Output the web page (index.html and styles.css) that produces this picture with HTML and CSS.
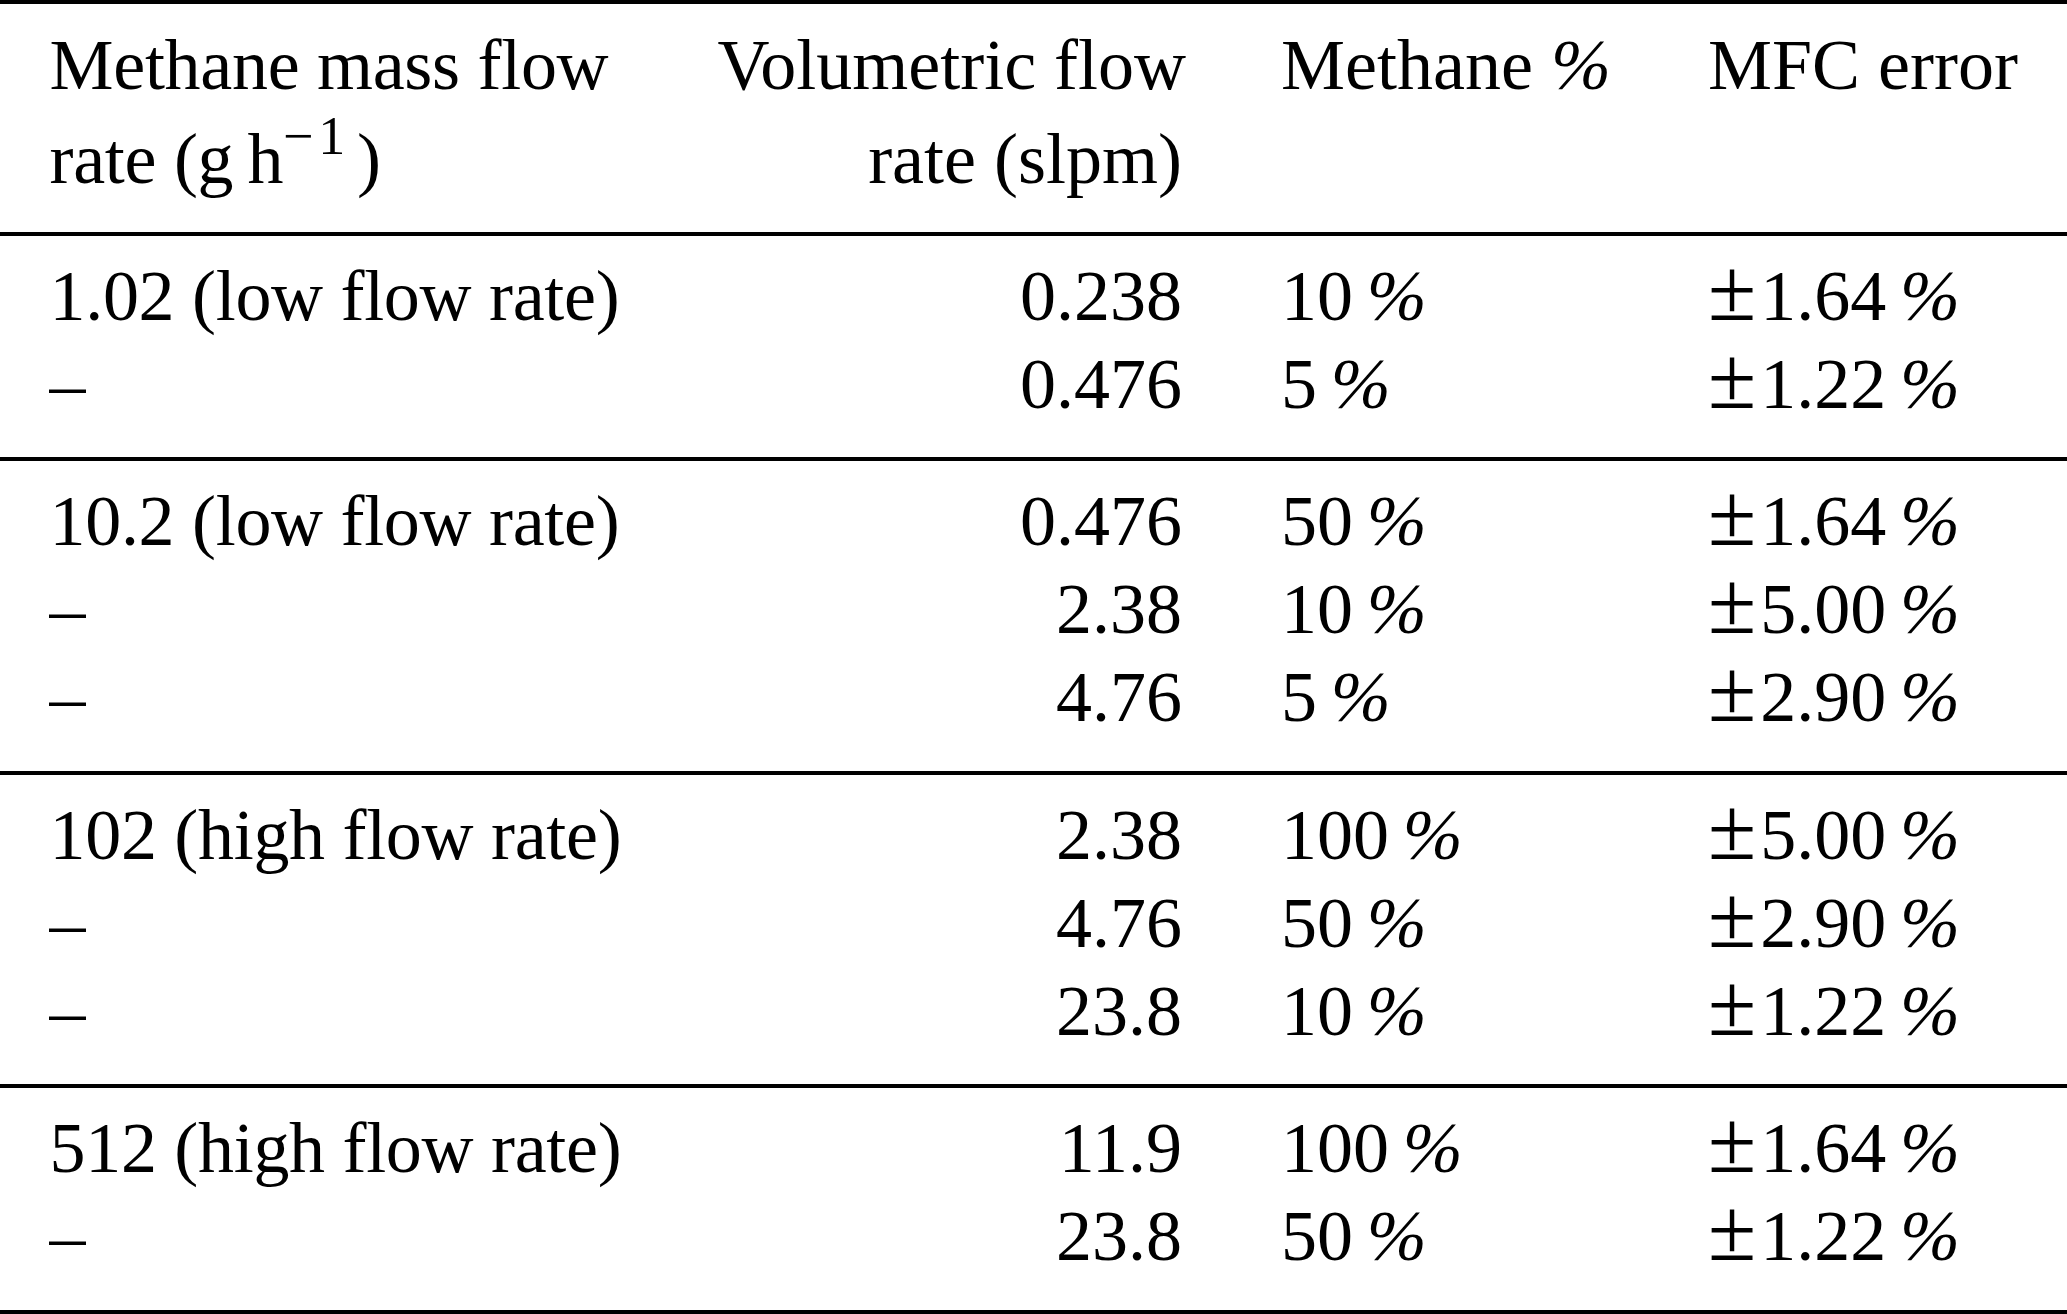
FILE: index.html
```html
<!DOCTYPE html>
<html lang="en">
<head>
<meta charset="utf-8">
<title>Methane flow rates</title>
<link rel="stylesheet" href="styles.css">
</head>
<body>
<table class="flow-table">
  <colgroup>
    <col class="c-mass">
    <col class="c-vol">
    <col class="c-pct">
    <col class="c-err">
  </colgroup>
  <thead>
    <tr>
      <th class="lab"><span class="hl">Methane mass flow</span><span class="hl hl2">rate (g&#8201;h<sup class="sup"><span class="mn">&minus;</span>1</sup>)</span></th>
      <th class="num"><span class="hl">Volumetric flow</span><span class="hl hl2">rate (slpm)</span></th>
      <th><span class="hl">Methane <span class="pc">%</span></span></th>
      <th><span class="hl">MFC error</span></th>
    </tr>
  </thead>
  <tbody>
    <tr><td class="lab">1.02 (low flow rate)</td><td class="num">0.238</td><td>10<span class="pc u">%</span></td><td><span class="pm">&plusmn;</span>1.64<span class="pc u">%</span></td></tr>
    <tr><td class="lab">&ndash;</td><td class="num">0.476</td><td>5<span class="pc u">%</span></td><td><span class="pm">&plusmn;</span>1.22<span class="pc u">%</span></td></tr>
  </tbody>
  <tbody>
    <tr><td class="lab">10.2 (low flow rate)</td><td class="num">0.476</td><td>50<span class="pc u">%</span></td><td><span class="pm">&plusmn;</span>1.64<span class="pc u">%</span></td></tr>
    <tr><td class="lab">&ndash;</td><td class="num">2.38</td><td>10<span class="pc u">%</span></td><td><span class="pm">&plusmn;</span>5.00<span class="pc u">%</span></td></tr>
    <tr><td class="lab">&ndash;</td><td class="num">4.76</td><td>5<span class="pc u">%</span></td><td><span class="pm">&plusmn;</span>2.90<span class="pc u">%</span></td></tr>
  </tbody>
  <tbody>
    <tr><td class="lab">102 (high flow rate)</td><td class="num">2.38</td><td>100<span class="pc u">%</span></td><td><span class="pm">&plusmn;</span>5.00<span class="pc u">%</span></td></tr>
    <tr><td class="lab">&ndash;</td><td class="num">4.76</td><td>50<span class="pc u">%</span></td><td><span class="pm">&plusmn;</span>2.90<span class="pc u">%</span></td></tr>
    <tr><td class="lab">&ndash;</td><td class="num">23.8</td><td>10<span class="pc u">%</span></td><td><span class="pm">&plusmn;</span>1.22<span class="pc u">%</span></td></tr>
  </tbody>
  <tbody>
    <tr><td class="lab">512 (high flow rate)</td><td class="num">11.9</td><td>100<span class="pc u">%</span></td><td><span class="pm">&plusmn;</span>1.64<span class="pc u">%</span></td></tr>
    <tr><td class="lab">&ndash;</td><td class="num">23.8</td><td>50<span class="pc u">%</span></td><td><span class="pm">&plusmn;</span>1.22<span class="pc u">%</span></td></tr>
  </tbody>
</table>
</body>
</html>
```
FILE: styles.css
```css
html, body {
  margin: 0;
  padding: 0;
  background: #ffffff;
}

body {
  font-family: "Liberation Serif", "Times New Roman", serif;
  font-size: 72px;
  color: #000000;
}

.flow-table {
  width: 2067px;
  table-layout: fixed;
  border-collapse: separate;
  border-spacing: 0;
  border-top: 4px solid #000;
  border-bottom: 4px solid #000;
}

.c-mass { width: 668px; }
.c-vol { width: 563.5px; }
.c-pct { width: 427px; }
.c-err { width: 408.5px; }

.flow-table th,
.flow-table td {
  padding: 0 49.5px;
  line-height: 88px;
  text-align: left;
  font-weight: normal;
  white-space: nowrap;
  vertical-align: top;
}

.flow-table th {
  padding-top: 16.7px;
  padding-bottom: 29.3px;
}

.flow-table .num {
  text-align: right;
}

.flow-table .lab {
  letter-spacing: -0.3px;
}

.hl {
  display: block;
}

.hl2 {
  margin-top: 6px;
}

.sup {
  font-size: 0.75em;
  line-height: 0;
  vertical-align: 29px;
  margin-right: 12px;
}

.mn {
  margin-right: 5px;
}

.pc {
  font-style: italic;
}

.pc.u {
  margin-left: 0.19em;
}

.pm {
  font-size: 1.22em;
  line-height: 0;
  margin-right: 4px;
}

.flow-table tbody tr:first-child td {
  border-top: 4px solid #000;
  padding-top: 16px;
}

.flow-table tbody tr:last-child td {
  padding-bottom: 29.5px;
}
```
